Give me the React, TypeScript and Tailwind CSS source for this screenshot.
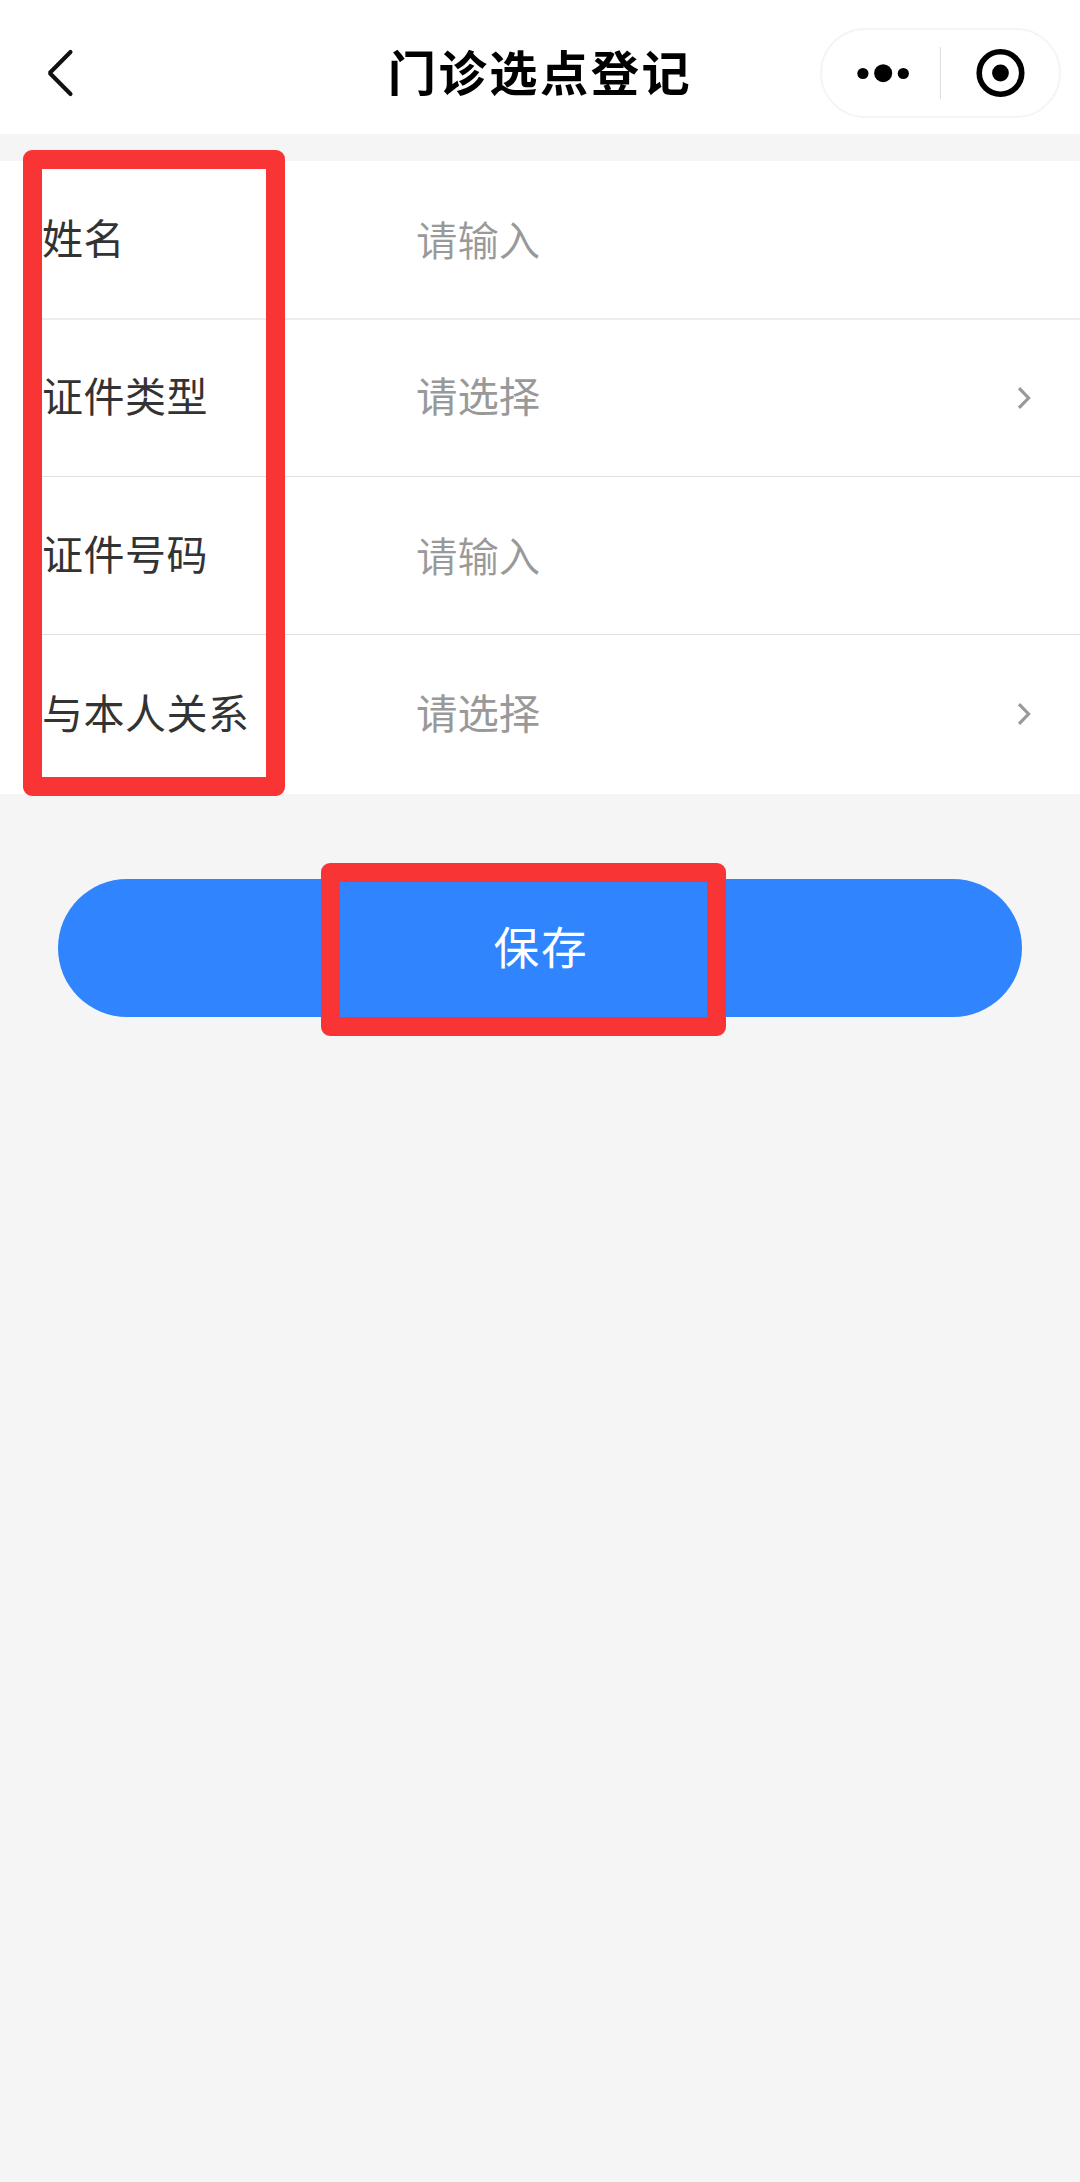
type Field = {
  label: string;
  placeholder: string;
  kind: "input" | "select";
  height: string;
  line: string;
};

const fields: Field[] = [
  { label: "姓名", placeholder: "请输入", kind: "input", height: "h-[159px]", line: "border-b-2 border-[#ededed]" },
  { label: "证件类型", placeholder: "请选择", kind: "select", height: "h-[157px]", line: "border-b border-[#e0e0e0]" },
  { label: "证件号码", placeholder: "请输入", kind: "input", height: "h-[158px]", line: "border-b border-[#e0e0e0]" },
  { label: "与本人关系", placeholder: "请选择", kind: "select", height: "h-[159px]", line: "" },
];

function Header() {
  return (
    <header className="flex h-[134px] items-center justify-between bg-white pt-3 pr-[19px] pl-11">
      <button aria-label="返回" className="flex w-[242px]">
        <svg width="30" height="52" viewBox="0 0 30 52" fill="none" stroke="#111" strokeWidth="4.1" strokeLinecap="round">
          <path d="M26.5 5 5.7 26l20.8 21" strokeLinejoin="bevel" />
        </svg>
      </button>
      <h1 className="mr-[26px] pb-[6px] text-[48.2px] leading-none font-bold tracking-[2.6px] whitespace-nowrap text-black">
        门诊选点登记
      </h1>
      <div className="flex h-[90px] w-[241px] items-center rounded-full border-2 border-[#f5f5f5]">
        <svg width="118" height="52" viewBox="0 0 118 52" fill="#000">
          <circle cx="41" cy="26.5" r="5.6" />
          <circle cx="61.3" cy="26.2" r="9" />
          <circle cx="81.5" cy="26.5" r="5.6" />
        </svg>
        <span className="h-[52px] w-[1.5px] bg-[#dedede]" />
        <svg width="118" height="52" viewBox="0 0 118 52">
          <circle cx="59.6" cy="26" r="21.3" fill="none" stroke="#000" strokeWidth="5.6" />
          <circle cx="59.6" cy="26" r="8.4" />
        </svg>
      </div>
    </header>
  );
}

function FieldRow({ field }: { field: Field }) {
  return (
    <div className={`ml-[42px] flex items-center pr-[47px] ${field.height} ${field.line}`}>
      <span className="w-[374px] pb-[7px] text-[41px] tracking-[0.5px] text-[#333]">{field.label}</span>
      <span className={`grow text-[#999] ${field.kind === "input" ? "pb-[2px] font-[350]" : "pb-[6px]"}`}>
        {field.placeholder}
      </span>
      {field.kind === "select" && (
        <svg className="mb-px" width="18" height="26" viewBox="0 0 18 26" fill="none" stroke="#999" strokeWidth="3.2">
          <path d="M4 3.2 13.6 13 4 22.8" />
        </svg>
      )}
    </div>
  );
}

export default function App() {
  return (
    <main className="min-h-[2182px] w-[1080px] bg-[#f5f5f5] font-['Noto_Sans_CJK_SC',sans-serif]">
      <Header />
      <section className="relative mt-[27px] bg-white text-[41.4px] leading-none">
        {fields.map((field) => (
          <FieldRow key={field.label} field={field} />
        ))}
        <div className="pointer-events-none absolute -top-[11px] left-[23px] h-[646px] w-[262px] rounded-[9px] border-[19px] border-[#f93434]" />
      </section>
      <div className="relative mx-[58px] mt-[85px]">
        <button className="flex h-[138px] w-full items-center justify-center rounded-full bg-[#3085ff] pb-[5px] pl-[2px] text-[45.7px] leading-none tracking-[1.9px] text-white">
          保存
        </button>
        <div className="pointer-events-none absolute -top-4 left-[263px] h-[173px] w-[405px] rounded-[9px] border-[19px] border-[#f93434]" />
      </div>
    </main>
  );
}
